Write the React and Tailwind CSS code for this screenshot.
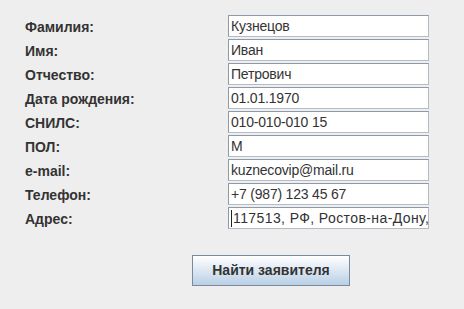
import React from 'react'

const FIELDS = [
  ['Фамилия:', 'Кузнецов'],
  ['Имя:', 'Иван'],
  ['Отчество:', 'Петрович'],
  ['Дата рождения:', '01.01.1970'],
  ['СНИЛС:', '010-010-010 15'],
  ['ПОЛ:', 'М'],
  ['e-mail:', 'kuznecovip@mail.ru'],
  ['Телефон:', '+7 (987) 123 45 67'],
  ['Адрес:', '117513, РФ, Ростов-на-Дону,', true],
]

export default function App() {
  return (
    <div className="h-[309px] w-[464px] bg-[#eeeeee] pl-[25px] pt-[15px] font-['Liberation_Sans',Arial,sans-serif] text-[14px] text-[#333333]">
      <div className="flex flex-col gap-[2px]">
        {FIELDS.map(([label, value, focused]) => (
          <div key={label} className="flex h-[22px] items-center">
            <span className="w-[203px] pt-[2px] font-bold">{label}</span>
            <div className="flex h-[22px] w-[201px] items-center overflow-hidden whitespace-nowrap border border-t-[#8d99a7] border-l-[#8d99a7] border-r-[#b3bcc6] border-b-[#b3bcc6] bg-white pl-[2px] shadow-[inset_1px_1px_0_#ffffff]">
              {focused && <span className="mr-px h-[17px] w-px shrink-0 bg-[#222222]" />}
              <span className={focused ? 'tracking-[0.4px]' : 'tracking-[-0.2px]'}>{value}</span>
            </div>
          </div>
        ))}
      </div>
      <button className="ml-[167px] mt-[26px] flex h-[31px] w-[158px] items-center justify-center border border-[#7a8a99] bg-gradient-to-b from-white to-[#b9cfe6] font-bold text-[#333333]">
        Найти заявителя
      </button>
    </div>
  )
}
